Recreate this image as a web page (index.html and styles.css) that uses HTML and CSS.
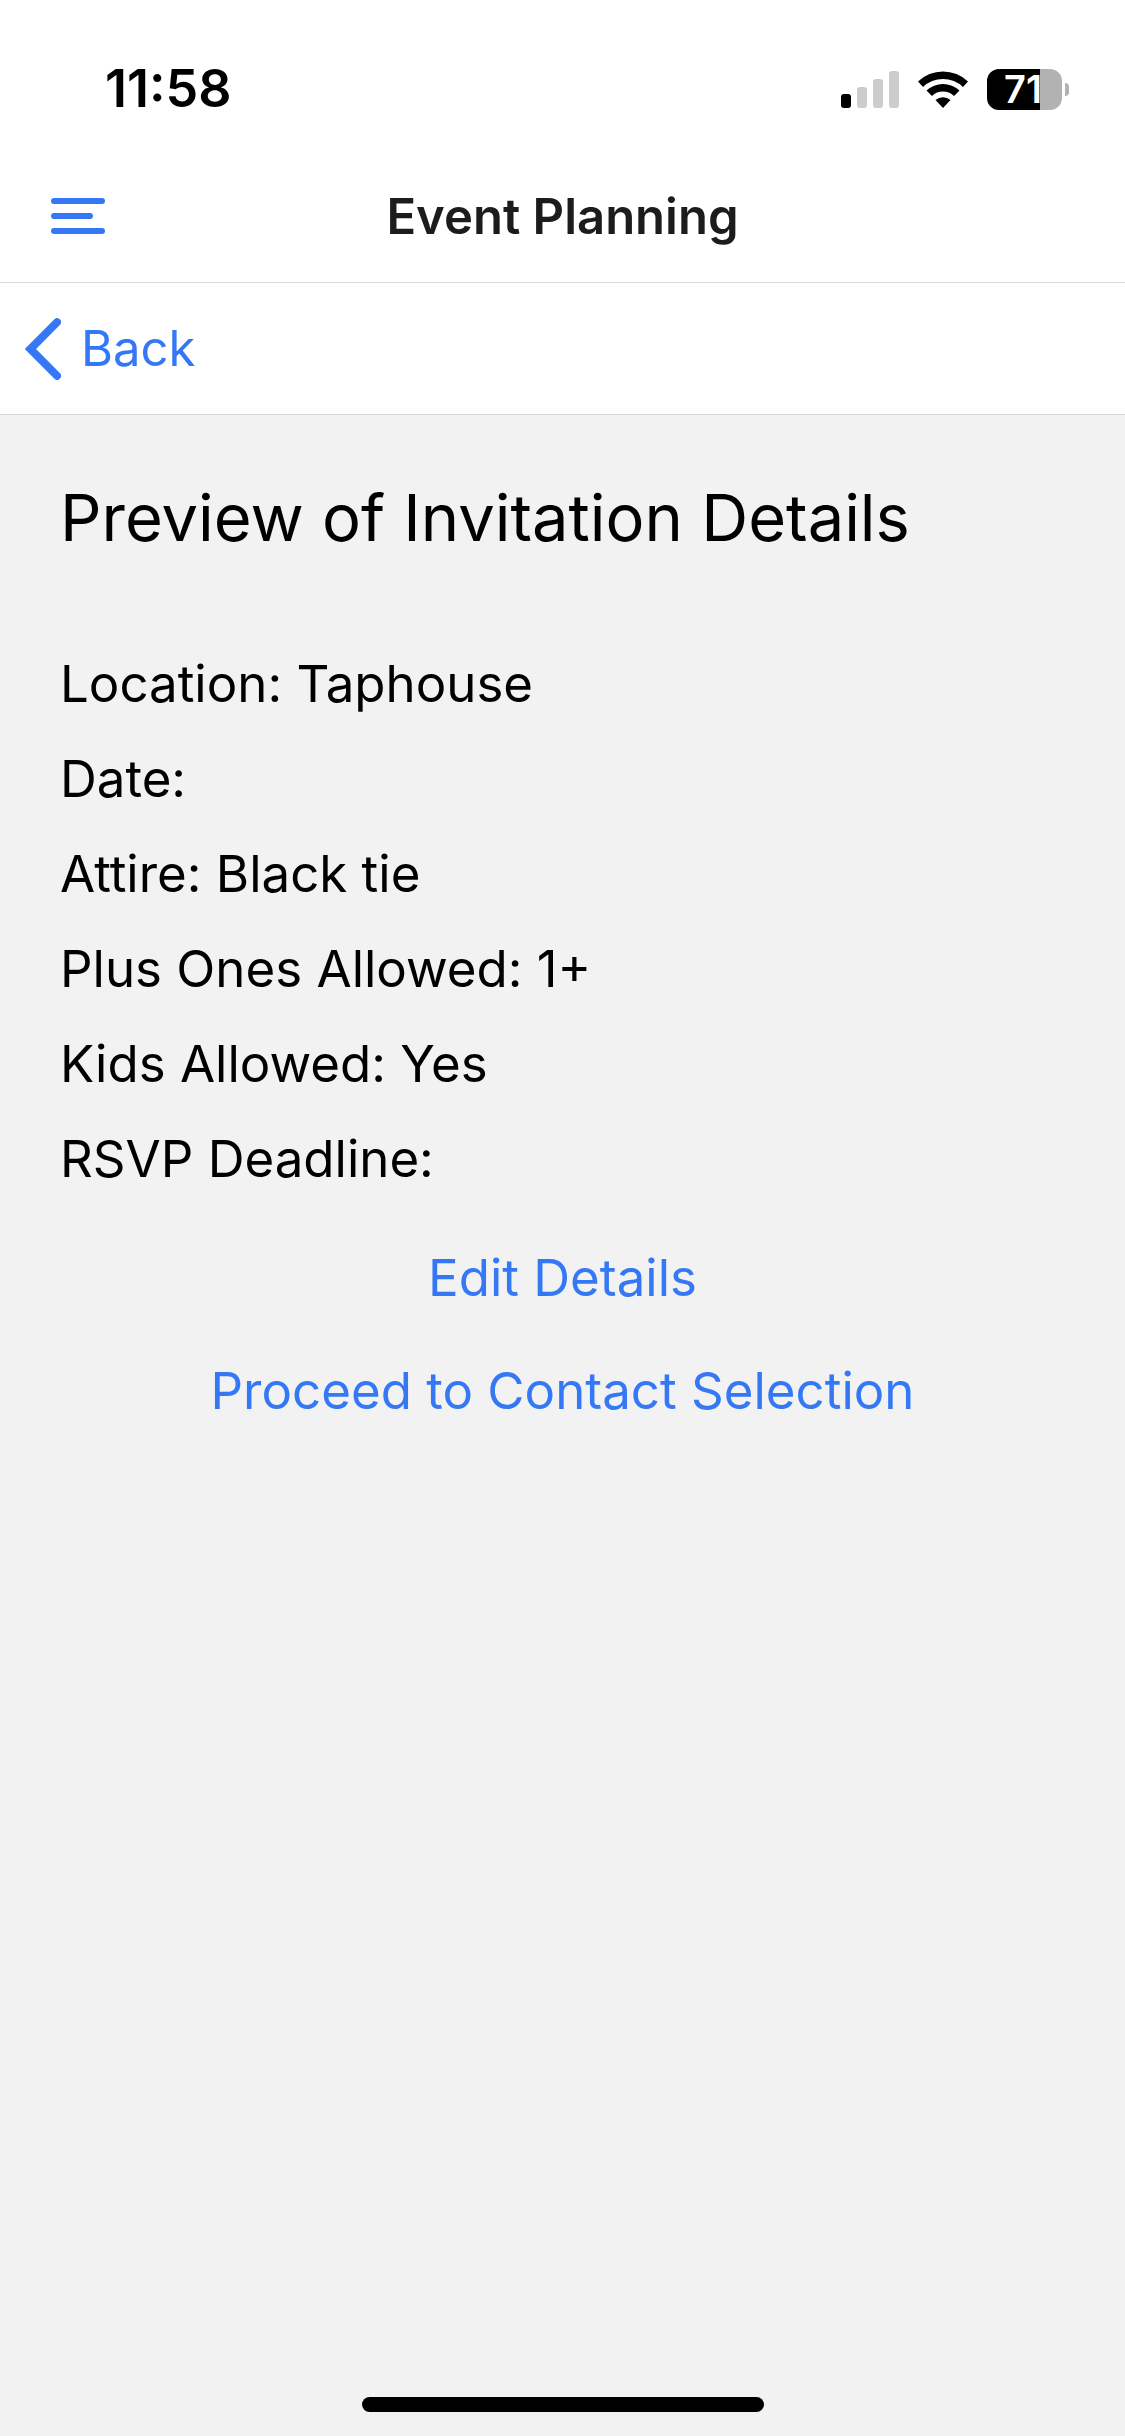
FILE: index.html
```html
<!DOCTYPE html>
<html lang="en">
<head>
<meta charset="utf-8">
<meta name="viewport" content="width=device-width, initial-scale=1">
<title>Event Planning</title>
<link rel="stylesheet" href="styles.css">
</head>
<body>
<div class="status-bar">
  <time class="clock">11:58</time>
  <div class="indicators">
    <svg class="signal" viewBox="0 0 58 38" width="58" height="38" aria-hidden="true">
      <rect x="0" y="24" width="10" height="14" rx="3"/>
      <g fill="#cccccc">
        <rect x="16" y="17" width="10" height="21" rx="3"/>
        <rect x="32" y="9" width="10" height="29" rx="3"/>
        <rect x="48" y="1" width="10" height="37" rx="3"/>
      </g>
    </svg>
    <svg class="wifi" viewBox="0 0 52 38" width="52" height="38" aria-hidden="true">
      <path d="M1 11.500A36 36 0 0 1 51 11.500L46 17A29 29 0 0 0 6 17Z"/>
      <path d="M9.500 20.500A24 24 0 0 1 42.500 20.500L37 26A16 16 0 0 0 15 26Z"/>
      <path d="M18.500 30A11.500 11.500 0 0 1 33.500 30L26 38Z"/>
    </svg>
    <div class="battery">
      <span class="battery-body">71</span>
      <span class="battery-cap"></span>
    </div>
  </div>
</div>
<header class="nav-bar">
  <button class="menu" type="button" aria-label="Menu">
    <svg viewBox="0 0 54 36" width="54" height="36" aria-hidden="true">
      <rect width="54" height="6" rx="3"/>
      <rect y="15" width="42" height="6" rx="3"/>
      <rect y="30" width="54" height="6" rx="3"/>
    </svg>
  </button>
  <h1 class="nav-title">Event Planning</h1>
</header>
<nav class="back-bar">
  <a class="back" href="#">
    <svg viewBox="0 0 36 62" width="36" height="62" aria-hidden="true">
      <path d="M32 4.200L5.500 31L32 57.800" fill="none" stroke="currentColor" stroke-width="8" stroke-linecap="round" stroke-linejoin="miter"/>
    </svg>
    Back
  </a>
</nav>
<main class="content">
  <h2 class="heading">Preview of Invitation Details</h2>
  <ul class="details">
    <li>Location: Taphouse</li>
    <li>Date:</li>
    <li>Attire: Black tie</li>
    <li>Plus Ones Allowed: 1+</li>
    <li>Kids Allowed: Yes</li>
    <li>RSVP Deadline:</li>
  </ul>
  <div class="actions">
    <button type="button">Edit Details</button>
    <button type="button">Proceed to Contact Selection</button>
  </div>
</main>
<footer class="home"><span class="home-indicator"></span></footer>
</body>
</html>
```
FILE: styles.css
```css
* {
  box-sizing: border-box;
}

body {
  margin: 0;
  min-height: 100vh;
  display: flex;
  flex-direction: column;
  background: #f2f2f2;
  color: #000;
  font-family: Inter, "Liberation Sans", sans-serif;
}

button {
  border: 0;
  padding: 0;
  background: none;
  color: #3478f6;
  font: inherit;
  cursor: pointer;
}

svg {
  display: block;
  fill: currentColor;
}

.status-bar {
  display: flex;
  justify-content: space-between;
  height: 150px;
  padding: 59px 56px 0 105px;
  background: #fff;
}

.clock {
  font-size: 52px;
  font-weight: 600;
  line-height: 60px;
}

.indicators {
  display: flex;
  align-items: center;
  gap: 18px;
  height: 60px;
}

.battery {
  display: flex;
  align-items: center;
  gap: 3px;
}

.battery-body {
  width: 75px;
  height: 41px;
  padding-left: 17px;
  border-radius: 12px;
  background: linear-gradient(to right, #000 53px, #b2b2b2 53px);
  color: #fff;
  font-size: 38px;
  font-weight: 600;
  line-height: 41px;
}

.battery-cap {
  width: 4px;
  height: 13px;
  border-radius: 0 4px 4px 0;
  background: #b2b2b2;
}

.nav-bar {
  display: grid;
  grid-template-columns: 1fr auto 1fr;
  align-items: center;
  height: 133px;
  padding: 0 51px;
  border-bottom: 1px solid #d8d8d8;
  background: #fff;
}

.menu {
  justify-self: start;
}

.nav-title {
  margin: 0;
  color: #1c1c1e;
  font-size: 49px;
  font-weight: 600;
}

.back-bar {
  display: flex;
  align-items: center;
  height: 132px;
  padding: 0 25px;
  border-bottom: 1px solid #d8d8d8;
  background: #fff;
}

.back {
  display: flex;
  align-items: center;
  gap: 20px;
  color: #3478f6;
  font-size: 49px;
  text-decoration: none;
}

.content {
  flex: 1;
  padding: 60px;
}

.heading {
  margin: 0;
  font-size: 65px;
  font-weight: 400;
  line-height: 86px;
}

.details {
  margin: 75px 0 0;
  padding: 0;
  list-style: none;
  font-size: 51px;
  line-height: 95px;
}

.actions {
  display: flex;
  flex-direction: column;
  align-items: center;
  margin-top: 15px;
  font-size: 51px;
  line-height: 113px;
}

.home {
  display: flex;
  justify-content: center;
  padding-bottom: 24px;
}

.home-indicator {
  width: 402px;
  height: 15px;
  border-radius: 8px;
  background: #000;
}
```
